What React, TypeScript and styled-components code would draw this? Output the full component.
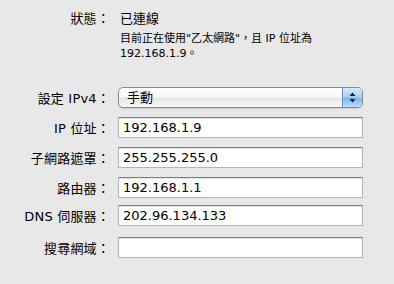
import React from "react";
import styled, { createGlobalStyle } from "styled-components";

const GlobalStyle = createGlobalStyle`
  html, body {
    margin: 0;
    padding: 0;
    background: #e8e8e8;
  }
  body {
    font-family: "DejaVu Sans", "Noto Sans CJK TC", sans-serif;
    color: #000;
  }
`;

const Page = styled.div`
  width: 394px;
  height: 284px;
  padding-top: 10px;
  box-sizing: border-box;
  background: #e8e8e8;
`;

const StatusRow = styled.div`
  display: grid;
  grid-template-columns: 110px 1fr;
  column-gap: 10px;
  font-size: 13px;
  line-height: 17px;
`;

const Label = styled.div`
  text-align: right;
  font-size: 13px;
  white-space: nowrap;
  letter-spacing: 0.2px;
`;

const Desc = styled.div`
  grid-column: 2;
  margin-top: 4px;
  font-size: 11px;
  line-height: 15px;
`;

const Form = styled.div`
  margin-top: 26px;
  display: grid;
  grid-template-columns: 110px 245px;
  column-gap: 8px;
`;

const Row = styled.div<{ $gap: number }>`
  display: contents;
  & > * {
    margin-top: ${(p) => p.$gap}px;
  }
`;

const FieldLabel = styled(Label)`
  align-self: center;
`;

const Field = styled.div`
  height: 21px;
  box-sizing: border-box;
  background: #fff;
  border: 1px solid #b4b4b4;
  border-top-color: #7f7f7f;
  box-shadow: inset 0 1px 1px rgba(0, 0, 0, 0.12);
  padding-left: 4px;
  font-size: 13px;
  line-height: 19px;
  white-space: nowrap;
`;

const Select = styled.div`
  height: 21px;
  box-sizing: border-box;
  display: flex;
  border: 1px solid #8c8c8c;
  border-radius: 5px;
  overflow: hidden;
  background: linear-gradient(#ffffff 0%, #f7f7f7 45%, #e9e9e9 55%, #f6f6f6 100%);
  box-shadow: 0 1px 1px rgba(0, 0, 0, 0.12);
`;

const SelectText = styled.div`
  flex: 1;
  padding-left: 8px;
  font-size: 13px;
  line-height: 19px;
`;

const Stepper = styled.div`
  width: 19px;
  border-left: 1px solid #6f90c0;
  background: linear-gradient(#d9e9fb 0%, #a9cdf3 48%, #7cb5ee 52%, #b6dbfb 100%);
  display: flex;
  align-items: center;
  justify-content: center;
`;

export default function App() {
  const rows = [
    { label: "IP 位址：", value: "192.168.1.9", gap: 9 },
    { label: "子網路遮罩：", value: "255.255.255.0", gap: 9 },
    { label: "路由器：", value: "192.168.1.1", gap: 9 },
    { label: "DNS 伺服器：", value: "202.96.134.133", gap: 7 },
    { label: "搜尋網域：", value: "", gap: 11 },
  ];

  return (
    <Page>
      <GlobalStyle />
      <StatusRow>
        <Label>狀態：</Label>
        <div>已連線</div>
        <Desc>
          目前正在使用"乙太網路"，且 IP 位址為
          <br />
          192.168.1.9。
        </Desc>
      </StatusRow>

      <Form>
        <FieldLabel>設定 IPv4：</FieldLabel>
        <Select>
          <SelectText>手動</SelectText>
          <Stepper>
            <svg width="7" height="11" viewBox="0 0 7 11">
              <path d="M3.5 0.5 L6.5 4 L0.5 4 Z" fill="#0e1e3a" />
              <path d="M3.5 10.5 L6.5 7 L0.5 7 Z" fill="#0e1e3a" />
            </svg>
          </Stepper>
        </Select>

        {rows.map((r) => (
          <Row key={r.label} $gap={r.gap}>
            <FieldLabel>{r.label}</FieldLabel>
            <Field>{r.value}</Field>
          </Row>
        ))}
      </Form>
    </Page>
  );
}
